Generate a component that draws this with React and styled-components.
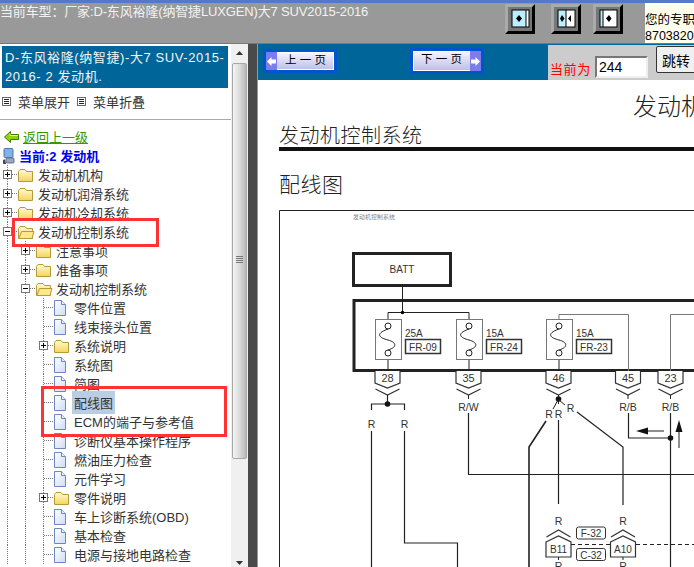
import React from "react";
import styled, { createGlobalStyle, css } from "styled-components";

const GlobalStyle = createGlobalStyle`
  html, body {
    margin: 0;
    padding: 0;
    width: 694px;
    height: 567px;
    overflow: hidden;
    background: #fff;
  }
  * { box-sizing: border-box; }
`;

const FONT = `"Liberation Sans", "Noto Sans CJK SC", sans-serif`;

const Shell = styled.div`
  position: relative;
  width: 694px;
  height: 567px;
  overflow: hidden;
  display: flex;
  flex-direction: column;
  font-family: ${FONT};
  color: #333;
`;

const TopBar = styled.div`
  flex: none;
  height: 44px;
  display: flex;
  background: #999;
  border-top: 3px solid #5577cc;
  border-bottom: 1px solid #777;
`;

const CarTitle = styled.div`
  flex: none;
  width: 505px;
  font-size: 13px;
  line-height: 17px;
  color: #f2f2f2;
  white-space: nowrap;
  letter-spacing: -0.15px;
`;

const ToolGroup = styled.div`
  flex: none;
  width: 140px;
  display: flex;
  padding-top: 1px;
`;

const ToolIcon = styled.svg`
  flex: none;
  width: 30px;
  height: 30px;
  margin-left: ${(p) => p.$offset || 0}px;
`;

const Notice = styled.div`
  flex: 1;
  background: #ffffee;
  color: #000;
  font-size: 12.5px;
  line-height: 16px;
  padding-top: 9px;
  white-space: nowrap;
  overflow: hidden;
`;

const Body = styled.div`
  flex: 1;
  min-height: 0;
  display: flex;
`;

const LeftPane = styled.div`
  flex: none;
  width: 248px;
  display: flex;
`;

const LeftContent = styled.div`
  flex: none;
  width: 231px;
  padding-top: 2px;
  overflow: hidden;
`;

const ModelBox = styled.div`
  margin: 0 3px 0 2px;
  height: 42px;
  padding: 2px 3px;
  background: #006699;
  color: #f4f4f4;
  font-size: 13px;
  line-height: 19px;
  letter-spacing: 0.6px;
`;

const MenuRow = styled.div`
  height: 32px;
  display: flex;
  align-items: center;
  padding: 0 0 4px 2px;
  font-size: 13px;
  border-bottom: 1px solid #aaa;
`;

const MenuIcon = styled.svg`
  width: 9px;
  height: 9px;
  margin-right: 7px;
`;

const MenuLabel = styled.span`
  margin-right: 7px;
`;

const Tree = styled.div`
  padding-top: 7px;
  font-size: 13px;
`;

const HeadRow = styled.div`
  height: 19px;
  display: flex;
  align-items: center;
  white-space: nowrap;
  padding-left: ${(p) => p.$pad}px;
`;

const BackLink = styled.a`
  color: #339900;
  text-decoration: underline;
  margin-left: 4px;
`;

const CurrentLabel = styled.b`
  color: #0000ee;
  margin-left: 4px;
`;

const Row = styled.div`
  height: 19px;
  display: flex;
  align-items: center;
  white-space: nowrap;
`;

const dots = css`
  background-image: repeating-linear-gradient(to bottom, #777 0 1px, transparent 1px 2px);
  background-repeat: no-repeat;
  background-position: 7px 0;
  background-size: 1px 100%;
`;

const Guide = styled.span`
  flex: none;
  width: 18px;
  height: 19px;
  ${(p) => p.$on && dots}
`;

const Branch = styled.span`
  flex: none;
  width: 18px;
  height: 19px;
  display: flex;
  align-items: center;
  background-image:
    repeating-linear-gradient(to bottom, #777 0 1px, transparent 1px 2px),
    repeating-linear-gradient(to right, #777 0 1px, transparent 1px 2px);
  background-repeat: no-repeat;
  background-position: 7px 0, 8px 9px;
  background-size: 1px 100%, 10px 1px;
`;

const ToggleBox = styled.span`
  width: 9px;
  height: 9px;
  margin-left: 3px;
  border: 1px solid #777;
  background: #fff;
  position: relative;
  &::before {
    content: "";
    position: absolute;
    left: 1px;
    right: 1px;
    top: 3px;
    height: 1px;
    background: #000;
  }
  &::after {
    content: "";
    display: ${(p) => (p.$open ? "none" : "block")};
    position: absolute;
    top: 1px;
    bottom: 1px;
    left: 3px;
    width: 1px;
    background: #000;
  }
`;

const NodeIcon = styled.svg`
  flex: none;
  width: 20px;
  height: 16px;
`;

const Label = styled.span`
  margin-left: 0;
  ${(p) =>
    p.$selected &&
    css`
      background: #b9cde5;
      padding: 2px 2px;
      margin-left: -2px;
    `}
`;

const Scrollbar = styled.div`
  flex: none;
  width: 17px;
  display: flex;
  flex-direction: column;
  align-items: center;
  background: #f0f0f0;
`;

const ScrollArrow = styled.svg`
  flex: none;
  width: 17px;
  height: 19px;
`;

const ScrollThumb = styled.div`
  flex: none;
  width: 15px;
  height: 396px;
  padding-bottom: 4px;
  border: 1px solid #a8a8a8;
  border-radius: 2px;
  background: linear-gradient(to right, #f4f4f4, #dcdcdc 50%, #b8b8b8);
  display: flex;
  flex-direction: column;
  align-items: center;
  justify-content: center;
  gap: 1px;
`;

const Grip = styled.i`
  width: 7px;
  height: 1px;
  background: #777;
`;

const Track = styled.div`
  flex: 1;
`;

const Divider = styled.div`
  flex: none;
  width: 10px;
  background: #4a4a4a;
  border-right: 1px solid #999;
`;

const RightPane = styled.div`
  flex: 1;
  min-width: 0;
  display: flex;
  flex-direction: column;
  overflow: hidden;
`;

const NavBar = styled.div`
  flex: none;
  height: 36px;
  background: #006699;
  display: flex;
  align-items: center;
  padding: 0 0 2px 5px;
`;

const PageButton = styled.div`
  flex: none;
  width: ${(p) => p.$width}px;
  height: ${(p) => p.$height}px;
  margin-left: ${(p) => p.$offset || 0}px;
  border: 3px solid #0055cc;
  display: flex;
  flex-direction: ${(p) => (p.$next ? "row-reverse" : "row")};
  background: linear-gradient(to bottom, #f8f8ff, #dcdcf6 45%, #bcbce6);
  box-shadow: inset 0 0 0 1px #fff;
  font-size: 11.5px;
  color: #000;
`;

const PageArrow = styled.span`
  flex: none;
  width: 11px;
  background: #7c7cee;
  color: #fff;
  display: flex;
  align-items: center;
  justify-content: center;
`;

const PageLabel = styled.span`
  flex: 1;
  text-align: center;
  line-height: 17px;
`;

const JumpPanel = styled.div`
  flex: none;
  width: 146px;
  height: 35px;
  margin: 0 0 -2px auto;
  align-self: flex-end;
  background: #cccccc;
  padding-left: 2px;
  display: flex;
  overflow: hidden;
`;

const JumpLabel = styled.span`
  flex: none;
  width: 45px;
  padding-top: 16px;
  font-size: 13px;
  line-height: 18px;
  color: #ff0000;
  letter-spacing: 0.6px;
`;

const PageInput = styled.input`
  flex: none;
  width: 53px;
  height: 22px;
  margin-top: 11px;
  padding: 0 2px;
  border: 2px solid;
  border-color: #777 #eee #eee #777;
  background: #fff;
  color: #000;
  font: 14px ${FONT};
`;

const JumpButton = styled.button`
  flex: none;
  width: 40px;
  height: 27px;
  margin: 1px 0 0 8px;
  padding: 0;
  border: 1px solid #333;
  border-radius: 2px;
  background: #f0f0f0;
  color: #000;
  font: 14px ${FONT};
`;

const Doc = styled.div`
  flex: 1;
  min-height: 0;
  padding: 13px 0 0 21px;
  background: #fff;
  color: #222;
  overflow: hidden;
`;

const DocTitle = styled.h1`
  margin: 0 0 0 354px;
  font-size: 24px;
  font-weight: 300;
  line-height: 28px;
  white-space: nowrap;
`;

const DocSection = styled.h2`
  margin: 5px 0 0;
  font-size: 20px;
  font-weight: 300;
  line-height: 21px;
  letter-spacing: 0.5px;
  border-bottom: 4px solid #111;
`;

const DocHeading = styled.h3`
  margin: 19px 0 0;
  font-size: 21px;
  font-weight: 300;
  line-height: 30px;
  letter-spacing: 0.5px;
`;

const Figure = styled.svg`
  display: block;
  width: 415px;
  height: 357px;
  margin-top: 10px;
`;

const Callout = styled.div`
  position: absolute;
  left: ${(p) => p.$x}px;
  top: ${(p) => p.$y}px;
  width: ${(p) => p.$w}px;
  height: ${(p) => p.$h}px;
  border: 3px solid #ff3333;
`;

const treeRows = [
  { level: 0, type: "closed", label: "发动机机构" },
  { level: 0, type: "closed", label: "发动机润滑系统" },
  { level: 0, type: "closed", label: "发动机冷却系统" },
  { level: 0, type: "open", label: "发动机控制系统" },
  { level: 1, type: "closed", label: "注意事项" },
  { level: 1, type: "closed", label: "准备事项" },
  { level: 1, type: "open", label: "发动机控制系统" },
  { level: 2, type: "doc", label: "零件位置" },
  { level: 2, type: "doc", label: "线束接头位置" },
  { level: 2, type: "closed", label: "系统说明" },
  { level: 2, type: "doc", label: "系统图" },
  { level: 2, type: "doc", label: "简图" },
  { level: 2, type: "doc", label: "配线图", selected: true },
  { level: 2, type: "doc", label: "ECM的端子与参考值" },
  { level: 2, type: "doc", label: "诊断仪基本操作程序" },
  { level: 2, type: "doc", label: "燃油压力检查" },
  { level: 2, type: "doc", label: "元件学习" },
  { level: 2, type: "closed", label: "零件说明" },
  { level: 2, type: "doc", label: "车上诊断系统(OBD)" },
  { level: 2, type: "doc", label: "基本检查" },
  { level: 2, type: "doc", label: "电源与接地电路检查" },
];

function Folder({ open }) {
  return (
    <NodeIcon viewBox="0 0 20 16">
      <defs>
        <linearGradient id="fold" x1="0" y1="0" x2="0" y2="1">
          <stop offset="0" stopColor="#fffbd8" />
          <stop offset="1" stopColor="#f5d458" />
        </linearGradient>
      </defs>
      <path
        d="M0.5 14.5V4.5L2 2.5H7L8.5 4.5H14.5V14.5Z"
        fill="url(#fold)"
        stroke="#b59a3a"
      />
      {open && <path d="M1 14.5L3.5 7.5H16L14 14.5Z" fill="#fbe88a" stroke="#b59a3a" />}
    </NodeIcon>
  );
}

function DocIcon() {
  return (
    <NodeIcon viewBox="0 0 20 16">
      <defs>
        <linearGradient id="page" x1="0" y1="0" x2="1" y2="1">
          <stop offset="0" stopColor="#ffffff" />
          <stop offset="1" stopColor="#cfdcf6" />
        </linearGradient>
      </defs>
      <path d="M0.5 0.5H7.5L11.5 4.5V15.5H0.5Z" fill="url(#page)" stroke="#6f86c4" />
      <path d="M7.5 0.5V4.5H11.5" fill="#e6ecfa" stroke="#6f86c4" />
    </NodeIcon>
  );
}

function TreeRow({ level, type, label, selected }) {
  const isDoc = type === "doc";
  return (
    <Row>
      {level > 0 && <Guide $on />}
      {level > 1 && <Guide $on />}
      <Branch>{!isDoc && <ToggleBox $open={type === "open"} />}</Branch>
      {isDoc ? <DocIcon /> : <Folder open={type === "open"} />}
      <Label $selected={selected}>{label}</Label>
    </Row>
  );
}

function WindowButton({ mode, offset }) {
  return (
    <ToolIcon viewBox="0 0 30 30" $offset={offset}>
      <rect width="30" height="30" fill="#aaa" />
      <path d="M30 0V30H0L3 27H27V3Z" fill="#000" />
      <rect x="3" y="3" width="24" height="24" fill="#777" />
      <rect x="6.5" y="5.5" width="18" height="18" fill="#000" />
      {mode === "left" && (
        <>
          <rect x="7.5" y="6.5" width="13" height="16" fill="#bbeeff" />
          <rect x="21.5" y="6.5" width="2" height="16" fill="#fff" />
          <path d="M11 14.5L14 11V18Z M14 11L17 14.5L14 18Z" fill="#000" />
        </>
      )}
      {mode === "both" && (
        <>
          <rect x="7.5" y="6.5" width="7" height="16" fill="#bbeeff" />
          <rect x="15.5" y="6.5" width="8" height="16" fill="#fff" />
          <path d="M9 14.5L11 11L13.5 14.5L11 18Z M17 14.5L20 11V18Z" fill="#000" />
        </>
      )}
      {mode === "right" && (
        <>
          <rect x="7.5" y="6.5" width="2" height="16" fill="#bbeeff" />
          <rect x="10.5" y="6.5" width="13" height="16" fill="#fff" />
          <path d="M13 14.5L16 11V18Z M16 11L18.5 14.5L16 18Z" fill="#000" />
        </>
      )}
    </ToolIcon>
  );
}

function MenuGlyph() {
  return (
    <MenuIcon viewBox="0 0 9 9">
      <rect x="0.5" y="0.5" width="8" height="8" fill="#fff" stroke="#666" />
      <path d="M2 2.5H7M2 4.5H7M2 6.5H7" stroke="#222" />
    </MenuIcon>
  );
}

const WIRE = "#222";
const THIN = "#777";

function Fuse({ x, rating, code }) {
  return (
    <g>
      <rect x={x - 12.5} y="319.5" width="26" height="40" fill="#fff" stroke={THIN} />
      <circle cx={x} cy="326" r="3" fill="#fff" stroke={WIRE} />
      <circle cx={x} cy="353" r="3" fill="#fff" stroke={WIRE} />
      <path
        d={`M${x} 329C${x - 14} 334 ${x - 8} 338 ${x} 340C${x + 8} 342 ${x + 10} 347 ${x} 350`}
        fill="none"
        stroke={WIRE}
      />
      <text x={x + 17} y="337" fontSize="10" fill="#333">{rating}</text>
      <rect x={x + 17.5} y="339.5" width="35" height="14" fill="#fff" stroke="#333" strokeWidth="1.5" />
      <text x={x + 35} y="351" fontSize="10" fill="#333" textAnchor="middle">{code}</text>
    </g>
  );
}

function Terminal({ x, n }) {
  return (
    <g>
      <path
        d={`M${x - 12.5} 371V383L${x} 388L${x + 12.5} 383V371`}
        fill="#fff"
        stroke="#333"
        strokeWidth="1.2"
      />
      <text x={x} y="382" fontSize="11" fill="#333" textAnchor="middle">{n}</text>
      <path d={`M${x - 12} 389L${x} 395L${x + 12} 389`} fill="none" stroke="#333" strokeWidth="1.2" />
    </g>
  );
}

function Joint({ x, name }) {
  return (
    <g>
      <path d={`M${x - 12} 537L${x} 530L${x + 12} 537`} fill="none" stroke="#333" strokeWidth="1.2" />
      <path
        d={`M${x - 12.5} 542L${x} 536L${x + 12.5} 542V557H${x - 12.5}Z`}
        fill="#fff"
        stroke="#333"
        strokeWidth="1.2"
      />
      <text x={x} y="553" fontSize="10" fill="#333" textAnchor="middle">{name}</text>
    </g>
  );
}

function Tag({ x, y, children }) {
  return (
    <text x={x} y={y} fontSize="10.5" fill="#333" textAnchor="middle">{children}</text>
  );
}

function WiringDiagram() {
  return (
    <Figure viewBox="279 210 415 357" fontFamily={FONT}>
      <path d="M694 210.5H279.5V567" fill="none" stroke="#222" />
      <text x="353" y="219" fontSize="6" fill="#888">发动机控制系统</text>

      <rect x="353.5" y="253.5" width="97" height="32" fill="#fff" stroke="#222" strokeWidth="3" />
      <text x="402" y="273" fontSize="10" fill="#333" textAnchor="middle">BATT</text>
      <path d="M402.5 287V313" stroke={WIRE} />
      <path d="M694 300.5H354V370.5H694" fill="none" stroke="#222" strokeWidth="3" />

      <path d="M388 323V312.5H469V323" fill="none" stroke={WIRE} />
      <path d="M388 356V371M469 356V371M559 356V371" stroke={WIRE} />
      <circle cx="402.5" cy="312.5" r="1.8" fill="#000" />
      <path d="M559 323V314.5H628.5V371M694 314.5H670.5V371" fill="none" stroke={THIN} />
      <Fuse x={388} rating="25A" code="FR-09" />
      <Fuse x={469} rating="15A" code="FR-24" />
      <Fuse x={559} rating="15A" code="FR-23" />

      <Terminal x={387.5} n="28" />
      <Terminal x={468.5} n="35" />
      <Terminal x={558.5} n="46" />
      <Terminal x={628} n="45" />
      <Terminal x={670.5} n="23" />

      {/* left pair */}
      <path d="M387.5 395V404M371.5 410V404H404.5V410" fill="none" stroke={WIRE} strokeWidth="1.2" />
      <circle cx="387.5" cy="404" r="2.8" fill="#111" />
      <Tag x={371.5} y={428}>R</Tag>
      <Tag x={404.5} y={428}>R</Tag>
      <path d="M371.5 431V567M404.5 431V543H457.5V567" fill="none" stroke={WIRE} strokeWidth="1.2" />

      {/* R/W run */}
      <path d="M468.5 395V399" stroke={WIRE} />
      <Tag x={468.5} y={411}>R/W</Tag>
      <path d="M468.5 413V474.5H694" fill="none" stroke={WIRE} strokeWidth="1.2" />

      {/* 46 branches */}
      <path d="M558.5 395V404" stroke={WIRE} />
      <circle cx="558.5" cy="399" r="2.8" fill="#111" />
      <path d="M558 400L553 409M559 400L565 405" stroke={WIRE} />
      <Tag x={549} y={418}>R</Tag>
      <Tag x={558.5} y={418}>R</Tag>
      <Tag x={570.5} y={412}>R</Tag>
      <path d="M546 421L529 447V567" fill="none" stroke={WIRE} strokeWidth="1.6" />
      <path d="M558.5 420V504" stroke={WIRE} strokeWidth="1.2" />
      <path d="M577 412L623 447V505" fill="none" stroke={WIRE} strokeWidth="1.2" />
      <Tag x={558.5} y={525}>R</Tag>
      <Tag x={623} y={525}>R</Tag>

      {/* 45 / 23 */}
      <path d="M628 395V399M670.5 395V399" stroke={WIRE} />
      <Tag x={628} y={411}>R/B</Tag>
      <Tag x={670.5} y={411}>R/B</Tag>
      <path d="M628.5 413V438H670.5M670.5 413V567" fill="none" stroke={WIRE} strokeWidth="1.2" />
      <circle cx="670.5" cy="438" r="2.8" fill="#111" />
      <path d="M664 431H647" stroke="#444" strokeWidth="1.2" />
      <path d="M636 431L648 427.5V434.5Z" fill="#111" />
      <path d="M679 448V431" stroke="#444" strokeWidth="1.2" />
      <path d="M679 420L675.5 432H682.5Z" fill="#111" />

      {/* joint connectors */}
      <Joint x={558.5} name="B11" />
      <Joint x={623} name="A10" />
      <path d="M571 544.5H610M636 544.5H694" stroke="#222" strokeWidth="1.2" strokeDasharray="4 3" />
      <rect x="576.5" y="527" width="29" height="12" rx="2" fill="#fff" stroke="#333" />
      <text x="591" y="537" fontSize="10" fill="#333" textAnchor="middle">F-32</text>
      <rect x="576.5" y="548.5" width="29" height="12" rx="2" fill="#fff" stroke="#333" />
      <text x="591" y="558.5" fontSize="10" fill="#333" textAnchor="middle">C-32</text>
      <path d="M558.5 557V560M623 557V560" stroke={WIRE} />
      <Tag x={558.5} y={570}>R</Tag>
      <Tag x={623} y={570}>R</Tag>
    </Figure>
  );
}

export default function App() {
  return (
    <Shell>
      <GlobalStyle />
      <TopBar>
        <CarTitle>当前车型：厂家:D-东风裕隆(纳智捷LUXGEN)大7 SUV2015-2016</CarTitle>
        <ToolGroup>
          <WindowButton mode="left" />
          <WindowButton mode="both" offset={16} />
          <WindowButton mode="right" offset={12} />
        </ToolGroup>
        <Notice>
          您的专职
          <br />
          8703820
        </Notice>
      </TopBar>

      <Body>
        <LeftPane>
          <LeftContent>
            <ModelBox>D-东风裕隆(纳智捷)-大7 SUV-2015-2016- 2 发动机.</ModelBox>
            <MenuRow>
              <MenuGlyph />
              <MenuLabel>菜单展开</MenuLabel>
              <MenuGlyph />
              <MenuLabel>菜单折叠</MenuLabel>
            </MenuRow>
            <Tree>
              <HeadRow $pad={4}>
                <svg width="15" height="12" viewBox="0 0 15 12">
                  <path d="M0.5 6L6.5 0.5V3.5H14.5V8.5H6.5V11.5Z" fill="#8ed400" stroke="#3c7a00" />
                  <path d="M6 2.5V4.5H14" fill="none" stroke="#eeff66" />
                </svg>
                <BackLink>返回上一级</BackLink>
              </HeadRow>
              <HeadRow $pad={3}>
                <svg width="12" height="16" viewBox="0 0 12 16">
                  <rect x="1" y="0.5" width="9" height="9" rx="1" fill="#7fb2ea" stroke="#5577aa" />
                  <rect x="3" y="10" width="8" height="5" rx="1" fill="#9aa7bd" stroke="#66728a" />
                  <path d="M2 12H0.5V15.5H3" fill="#445" stroke="#445" />
                </svg>
                <CurrentLabel>当前:2 发动机</CurrentLabel>
              </HeadRow>
              {treeRows.map((row, i) => (
                <TreeRow key={i} {...row} />
              ))}
            </Tree>
          </LeftContent>
          <Scrollbar>
            <ScrollArrow viewBox="0 0 17 19">
              <path d="M5 11L8.5 7L12 11Z" fill="#333" />
            </ScrollArrow>
            <ScrollThumb>
              <Grip />
              <Grip />
              <Grip />
              <Grip />
            </ScrollThumb>
            <Track />
            <ScrollArrow viewBox="0 0 17 19">
              <path d="M5 13L8.5 17L12 13Z" fill="#333" />
            </ScrollArrow>
          </Scrollbar>
        </LeftPane>
        <Divider />
        <RightPane>
          <NavBar>
            <PageButton $width={74} $height={24}>
              <PageArrow>
                <svg width="9" height="9" viewBox="0 0 9 9">
                  <path d="M0 4.5L4.5 0V2.5H9V6.5H4.5V9Z" fill="#fff" />
                </svg>
              </PageArrow>
              <PageLabel>上 一 页</PageLabel>
            </PageButton>
            <PageButton $width={74} $height={26} $offset={73} $next>
              <PageArrow>
                <svg width="9" height="9" viewBox="0 0 9 9">
                  <path d="M9 4.5L4.5 0V2.5H0V6.5H4.5V9Z" fill="#fff" />
                </svg>
              </PageArrow>
              <PageLabel>下 一 页</PageLabel>
            </PageButton>
            <JumpPanel>
              <JumpLabel>当前为</JumpLabel>
              <PageInput defaultValue="244" />
              <JumpButton>跳转</JumpButton>
            </JumpPanel>
          </NavBar>
          <Doc>
            <DocTitle>发动机</DocTitle>
            <DocSection>发动机控制系统</DocSection>
            <DocHeading>配线图</DocHeading>
            <WiringDiagram />
          </Doc>
        </RightPane>
      </Body>

      <Callout $x={12} $y={218} $w={147} $h={29} />
      <Callout $x={41} $y={386} $w={186} $h={51} />
    </Shell>
  );
}
